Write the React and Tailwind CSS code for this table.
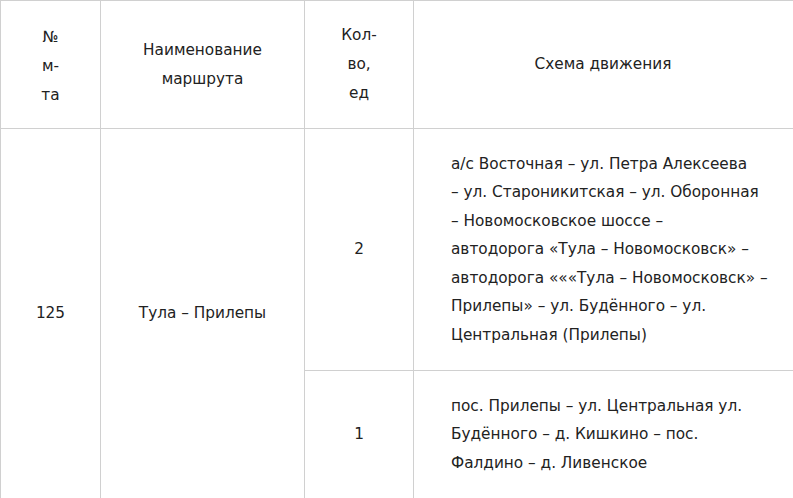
export default function App() {
  const font = { fontFamily: '"DejaVu Sans", "Liberation Sans", sans-serif' };
  const route1 = [
    "а/с Восточная – ул. Петра Алексеева",
    "– ул. Староникитская – ул. Оборонная",
    "– Новомосковское шоссе –",
    "автодорога «Тула – Новомосковск» –",
    "автодорога «««Тула – Новомосковск» –",
    "Прилепы» – ул. Будённого – ул.",
    "Центральная (Прилепы)",
  ];
  const route2 = [
    "пос. Прилепы – ул. Центральная ул.",
    "Будённого – д. Кишкино – пос.",
    "Фалдино – д. Ливенское",
  ];
  const cell = "border-r border-b border-[#d0d0d0] flex items-center justify-center text-center";
  return (
    <div className="w-[793px] h-[498px] overflow-hidden bg-white">
      <div
        className="w-[800px] grid grid-cols-[100px_204px_109px_1fr] grid-rows-[128px_242px_128px] border-l border-t border-[#d0d0d0] text-[15.3px] leading-[28.5px] text-[#222]"
        style={font}
      >
        <div className={cell}>
          <div className="leading-[29px] pt-[3px]">№<br />м-<br />та</div>
        </div>
        <div className={cell}>
          <div className="leading-[29px]">Наименование<br />маршрута</div>
        </div>
        <div className={cell}>
          <div className="leading-[29px]">Кол-<br />во,<br />ед</div>
        </div>
        <div className={cell + " pr-[7px]"}>Схема движения</div>

        <div className={cell + " row-span-2"}>125</div>
        <div className={cell + " row-span-2"}>Тула – Прилепы</div>
        <div className={cell}>2</div>
        <div className="border-r border-b border-[#d0d0d0] flex items-center pl-[37px]">
          <div className="whitespace-nowrap">
            {route1.map((l, i) => (
              <div key={i}>{l}</div>
            ))}
          </div>
        </div>
        <div className={cell}>1</div>
        <div className="border-r border-b border-[#d0d0d0] flex items-center pl-[37px]">
          <div className="whitespace-nowrap">
            {route2.map((l, i) => (
              <div key={i}>{l}</div>
            ))}
          </div>
        </div>
      </div>
    </div>
  );
}
